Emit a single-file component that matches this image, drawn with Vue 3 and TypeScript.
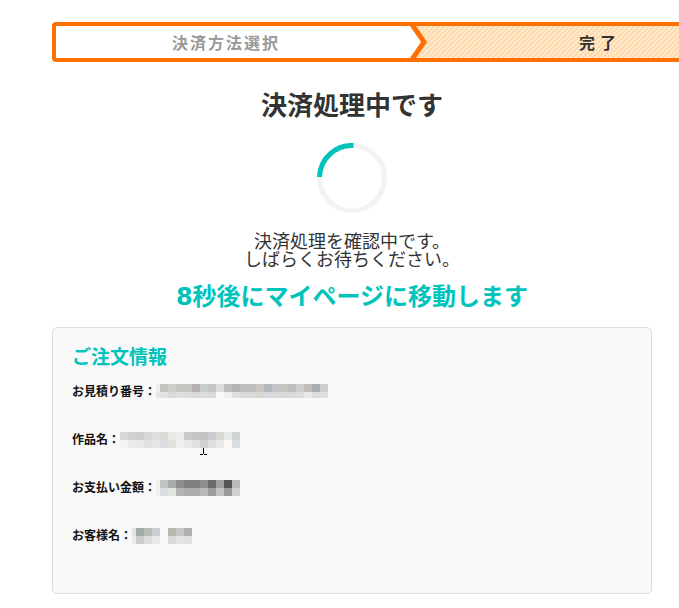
<script setup lang="ts">
interface OrderRow {
  label: string
  /** Width of the first, narrower mosaic block. */
  lead: number
  top: string[]
  bottom: string[]
}

const block = 8
const seconds = 8

const rows: OrderRow[] = [
  {
    label: 'お見積り番号：',
    lead: 4,
    top: '#f0f0ee #c3c3c1 #cfcfc9 #c4c4c3 #c2c6bf #b3b1b2 #c8cfce #c3c4c3 #dfdbd8 #bcbdbc #b5b6b1 #bebebe #bebebd #cbc6bf #b2b8bb #c2c6c8 #c5c6c1 #bdbdbc #cfcfcf #c1bcb9 #a9b0b0 #cdd0d0'.split(' '),
    bottom: '#e8e8e8 #e2e2e1 #dadada #e1dfdd #dcdedb #dadada #dadbda #dadada #f9f9f9 #efefef #dfded9 #dadada #d9d9d9 #d6d7d2 #d8dbdd #d8d9d8 #d8d8d6 #d9d9d7 #dadcde #e9e9e9 #d9dcde #dfdfdf'.split(' '),
  },
  {
    label: '作品名：',
    lead: 8,
    top: '#d7d7d5 #d0d1d0 #cdcfcf #d8d7d5 #dededc #dadcda #e8e8e5 #ededed #c7c9ca #c5c5c5 #c1c3c5 #cbced0 #d7d7d5 #e8eae7 #d2d5d5'.split(' '),
    bottom: '#f3f3f3 #eaebeb #e8e9e8 #e3e1df #e6e7e5 #dadddd #e1e2dd #eff0f0 #e8e8e8 #e0e2e1 #d2d0ce #dddfde #e8e9ea #faf8f3 #dadede'.split(' '),
  },
  {
    label: 'お支払い金額：',
    lead: 4,
    top: '#f4f1eb #bfc3c6 #a5adaa #8e8e8e #808080 #808080 #8e8e8e #6b6b6b #a2a2a2 #555555 #bcbcbc'.split(' '),
    bottom: '#f3f1ed #dadee0 #e3e5e2 #b5b5b5 #aeaeae #aeaeae #b9b9b9 #9d9d9d #c3c3c3 #999999 #d1d1d1'.split(' '),
  },
  {
    label: 'お客様名：',
    lead: 4,
    top: '#e5e2e0 #a3abad #bbbdb8 #cbcfd2 none #b5b7b0 #c5c7c8 #aeb0af'.split(' '),
    bottom: '#ebebeb #cbcdce #dddeda #e8e9e9 none #d9dad6 #e1e3e4 #e0e2e1'.split(' '),
  },
]

const blockX = (row: OrderRow, i: number): number => (i === 0 ? 0 : row.lead + (i - 1) * block)
const blockWidth = (row: OrderRow, i: number): number => (i === 0 ? row.lead : block)
const mosaicWidth = (row: OrderRow): number => row.lead + (row.top.length - 1) * block
</script>

<template>
  <main class="page">
    <ol class="steps">
      <li class="step">決済方法選択</li>
      <li class="step current" aria-current="step">
        <svg class="stripes" aria-hidden="true">
          <defs>
            <pattern id="stripe" width="5" height="5" patternUnits="userSpaceOnUse">
              <rect width="5" height="5" fill="#ffdbb0" />
              <path d="M-1 1L1 -1M-1 6L6 -1M4 6L6 4" stroke="#fff8ee" stroke-width="1" />
            </pattern>
          </defs>
          <rect width="100%" height="100%" fill="url(#stripe)" />
        </svg>
        <svg class="chevron" width="16" height="32" viewBox="0 0 16 32" overflow="visible" aria-hidden="true">
          <path d="M0 0L10 16L0 32Z" fill="#fff" />
          <path d="M-2 0H4L15 16L4 32H-2L9 16Z" fill="#ff6e00" />
        </svg>
        <span class="step-name">完了</span>
      </li>
    </ol>

    <section class="status">
      <h1>決済処理中です</h1>
      <svg class="spinner" width="70" height="70" viewBox="0 0 70 70" role="img" aria-label="決済処理中です">
        <circle cx="35" cy="35" r="32.5" fill="none" stroke="#f3f3f3" stroke-width="5" />
        <path d="M2.5 34A32.5 32.5 0 0 1 36.5 2.5" fill="none" stroke="#00c4bc" stroke-width="5" />
      </svg>
      <p class="message">決済処理を確認中です。<br />しばらくお待ちください。</p>
      <p class="countdown">{{ seconds }}秒後にマイページに移動します</p>
    </section>

    <section class="order">
      <h2>ご注文情報</h2>
      <dl>
        <div v-for="row in rows" :key="row.label" class="row">
          <dt>{{ row.label }}</dt>
          <dd>
            <svg :width="mosaicWidth(row)" height="16" shape-rendering="crispEdges" aria-hidden="true">
              <rect
                v-for="(fill, i) in row.top"
                :key="'t' + i"
                :x="blockX(row, i)"
                y="0"
                :width="blockWidth(row, i)"
                height="8"
                :fill="fill"
              />
              <rect
                v-for="(fill, i) in row.bottom"
                :key="'b' + i"
                :x="blockX(row, i)"
                y="8"
                :width="blockWidth(row, i)"
                :height="row === rows[0] ? 6 : 8"
                :fill="fill"
              />
            </svg>
            <svg v-if="row === rows[1]" class="caret" width="7" height="7" viewBox="0 0 7 7" shape-rendering="crispEdges" aria-hidden="true">
              <path d="M3 0H4V6H7V7H4V6H3V7H0V6H3Z" fill="#000" />
            </svg>
          </dd>
        </div>
      </dl>
    </section>
  </main>
</template>

<style>
body {
  background: #fff;
}
</style>

<style scoped>
.page {
  padding: 22px 27px 14px 52px;
  overflow: hidden;
  color: #333;
  font-family: "Noto Sans CJK JP", sans-serif;
}

.steps {
  display: flex;
  box-sizing: border-box;
  width: 120%;
  margin: 0;
  padding: 0;
  list-style: none;
  border: 4px solid #ff6e00;
  border-radius: 4px;
}

.step {
  position: relative;
  box-sizing: border-box;
  width: 50%;
  padding-right: 16px;
  color: #999;
  font-size: 16px;
  font-weight: 700;
  line-height: 32px;
  letter-spacing: 2px;
  text-align: center;
}

.current {
  padding: 0 0 0 20px;
  color: #333;
  letter-spacing: 5px;
}

.stripes {
  position: absolute;
  inset: 0;
  width: 100%;
  height: 100%;
}

.chevron {
  position: absolute;
  top: 0;
  left: 0;
}

.step-name {
  position: relative;
}

.status {
  display: flex;
  flex-direction: column;
  align-items: center;
  text-align: center;
}

h1 {
  margin: 24px 0 0;
  font-size: 26px;
  font-weight: 700;
  line-height: 36px;
}

.spinner {
  display: block;
  margin-top: 21px;
}

.message {
  margin: 18px 0 0;
  font-size: 18px;
  line-height: 18px;
}

.countdown {
  margin: 12px 0 0;
  color: #00c4bc;
  font-family: "DejaVu Sans", "Noto Sans CJK JP", sans-serif;
  font-size: 24px;
  font-weight: 700;
  line-height: 36px;
}

.order {
  margin-top: 12px;
  padding: 16px 19px 33px;
  background: #f9f9f9;
  border: 1px solid #ddd;
  border-radius: 5px;
}

h2 {
  margin: 0;
  color: #00c4bc;
  font-size: 19px;
  font-weight: 700;
  line-height: 24px;
}

dl {
  margin: 0;
}

.row {
  display: flex;
  align-items: flex-start;
  height: 32px;
  padding-top: 16px;
}

dt {
  color: #111;
  font-size: 12px;
  font-weight: 700;
  line-height: 14px;
}

dd {
  position: relative;
  margin: 0;
}

dd svg {
  display: block;
}

dd .caret {
  position: absolute;
  top: 16px;
  left: 80px;
}
</style>
